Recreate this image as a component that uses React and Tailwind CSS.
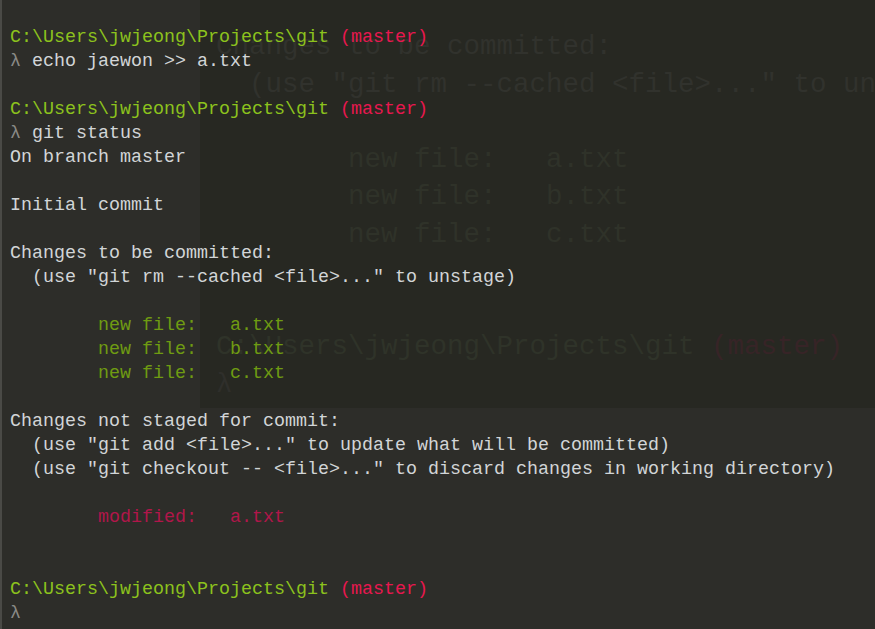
import React from "react";

const G = "text-[#8cc21d]";
const R = "text-[#e8174f]";
const W = "text-[#d2d5d7]";
const L = "text-[#8a8a86]";
const NG = "text-[#6f9b12]";
const NR = "text-[#b1164a]";

function Prompt() {
  return (
    <div className="h-6 leading-6">
      <span className={G}>C:\Users\jwjeong\Projects\git</span>
      <span className={W}> </span>
      <span className={R}>(master)</span>
    </div>
  );
}

function Line({ children, cls = W }) {
  return <div className={`h-6 leading-6 ${cls}`}>{children}</div>;
}

export default function App() {
  return (
    <div
      className="relative w-[875px] h-[629px] overflow-hidden bg-[#2d2d29] border-l-2 border-[#4a4a46]"
      style={{ fontFamily: '"Liberation Mono", "DejaVu Sans Mono", monospace' }}
    >
      {/* ghost layer */}
      <div className="absolute left-[198px] top-0 w-[677px] h-[408px] bg-[#272822] pl-[16px] pt-[28px] text-[27.5px] leading-[37.5px] whitespace-pre text-[#31322d]">
        <div className="h-[37.5px]">Changes to be committed:</div>
        <div className="h-[37.5px]">{'  (use "git rm --cached <file>..." to unstage)'}</div>
        <div className="h-[37.5px]"></div>
        <div className="h-[37.5px] text-[#2f3229]">{"        new file:   a.txt"}</div>
        <div className="h-[37.5px] text-[#2f3229]">{"        new file:   b.txt"}</div>
        <div className="h-[37.5px] text-[#2f3229]">{"        new file:   c.txt"}</div>
        <div className="h-[37.5px]"></div>
        <div className="h-[37.5px]"></div>
        <div className="h-[37.5px]">
          <span className="text-[#2f3329]">C:\Users\jwjeong\Projects\git</span>{" "}
          <span className="text-[#372427]">(master)</span>
        </div>
        <div className="h-[37.5px] text-[#2f2f2b]">λ</div>
      </div>

      <div className="relative pt-[26px] pl-2 text-[18.33px] whitespace-pre">
        <Prompt />
        <Line><span className={L}>λ</span> echo jaewon &gt;&gt; a.txt</Line>
        <Line>{" "}</Line>
        <Prompt />
        <Line><span className={L}>λ</span> git status</Line>
        <Line>On branch master</Line>
        <Line>{" "}</Line>
        <Line>Initial commit</Line>
        <Line>{" "}</Line>
        <Line>Changes to be committed:</Line>
        <Line>{'  (use "git rm --cached <file>..." to unstage)'}</Line>
        <Line>{" "}</Line>
        <Line cls={NG}>{"        new file:   a.txt"}</Line>
        <Line cls={NG}>{"        new file:   b.txt"}</Line>
        <Line cls={NG}>{"        new file:   c.txt"}</Line>
        <Line>{" "}</Line>
        <Line>Changes not staged for commit:</Line>
        <Line>{'  (use "git add <file>..." to update what will be committed)'}</Line>
        <Line>{'  (use "git checkout -- <file>..." to discard changes in working directory)'}</Line>
        <Line>{" "}</Line>
        <Line cls={NR}>{"        modified:   a.txt"}</Line>
        <Line>{" "}</Line>
        <Line>{" "}</Line>
        <Prompt />
        <Line><span className={L}>λ</span></Line>
      </div>
    </div>
  );
}
